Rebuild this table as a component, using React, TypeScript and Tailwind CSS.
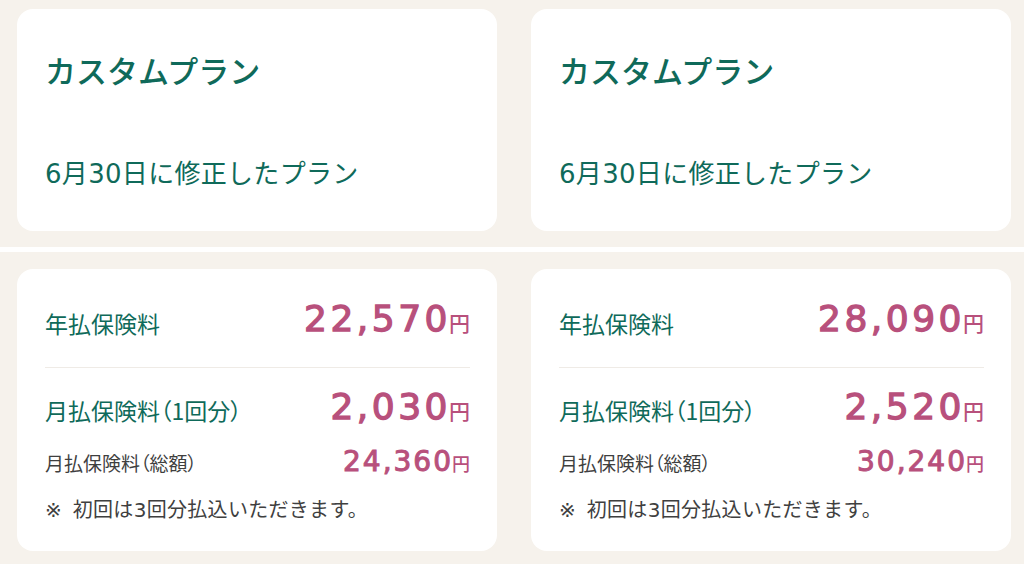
import React from "react";

const jp = { fontFamily: '"Noto Sans CJK JP", "Noto Sans", sans-serif' };
const mix = { fontFamily: '"DejaVu Sans", "Noto Sans CJK JP", sans-serif' };
const num = { fontFamily: '"DejaVu Sans", "Noto Sans CJK JP", sans-serif' };

type Plan = { annual: string; monthly: string; total: string };

const plans: Plan[] = [
  { annual: "22,570", monthly: "2,030", total: "24,360" },
  { annual: "28,090", monthly: "2,520", total: "30,240" },
];

function TopCard() {
  return (
    <div className="bg-white rounded-[16px] h-[222px] pl-[28px] pt-[41px] flex flex-col" style={jp}>
      <div className="text-[31px] leading-[40px] font-medium text-[#0f6a5a]">カスタムプラン</div>
      <div className="mt-[66px] text-[26px] leading-[36px] tracking-[0.3px] text-[#0f6a5a]" style={mix}>
        6月30日に修正したプラン
      </div>
    </div>
  );
}

function Amount({ value, big }: { value: string; big: boolean }) {
  return (
    <div className="flex items-baseline text-[#b8507c]">
      <span
        className={
          big
            ? "text-[36px] leading-[44px] tracking-[3.5px] -mr-[2px] [-webkit-text-stroke:1.3px_#b8507c]"
            : "text-[28px] leading-[34px] tracking-[2px] -mr-[1px] [-webkit-text-stroke:1px_#b8507c]"
        }
        style={num}
      >
        {value}
      </span>
      <span className={big ? "text-[21px] font-medium" : "text-[18px] font-medium"} style={jp}>
        円
      </span>
    </div>
  );
}

function BottomCard({ p }: { p: Plan }) {
  return (
    <div className="bg-white rounded-[16px] h-[282px] pl-[28px] pr-[27px] pt-[28px] flex flex-col" style={jp}>
      <div className="flex items-baseline justify-between">
        <span className="text-[23px] text-[#0f6a5a] relative top-[2px] [font-feature-settings:'palt']">年払保険料</span>
        <Amount value={p.annual} big />
      </div>
      <div className="mt-[26px] border-t border-[#efebe6]" />
      <div className="mt-[17px] flex items-baseline justify-between">
        <span className="text-[23px] text-[#0f6a5a] relative top-[1px] [font-feature-settings:'palt']">月払保険料（1回分）</span>
        <Amount value={p.monthly} big />
      </div>
      <div className="mt-[16px] flex items-baseline justify-between">
        <span className="text-[19px] text-[#3f3f3f] [font-feature-settings:'palt']">月払保険料（総額）</span>
        <Amount value={p.total} big={false} />
      </div>
      <div className="mt-[17px] flex text-[20px] leading-[28px] text-[#3f3f3f]" style={mix}>
        <span>※</span>
        <span className="ml-[11px] tracking-[0.3px]">初回は3回分払込いただきます。</span>
      </div>
    </div>
  );
}

export default function App() {
  return (
    <div className="w-[1024px] h-[564px] bg-[#f6f2ec] overflow-hidden">
      <div className="grid grid-cols-2 gap-[34px] pl-[17px] pr-[13px] pt-[9px] pb-[16px]">
        <TopCard />
        <TopCard />
      </div>
      <div className="h-[5px] bg-white" />
      <div className="grid grid-cols-2 gap-[34px] pl-[17px] pr-[13px] pt-[17px]">
        {plans.map((p, i) => (
          <BottomCard key={i} p={p} />
        ))}
      </div>
    </div>
  );
}
